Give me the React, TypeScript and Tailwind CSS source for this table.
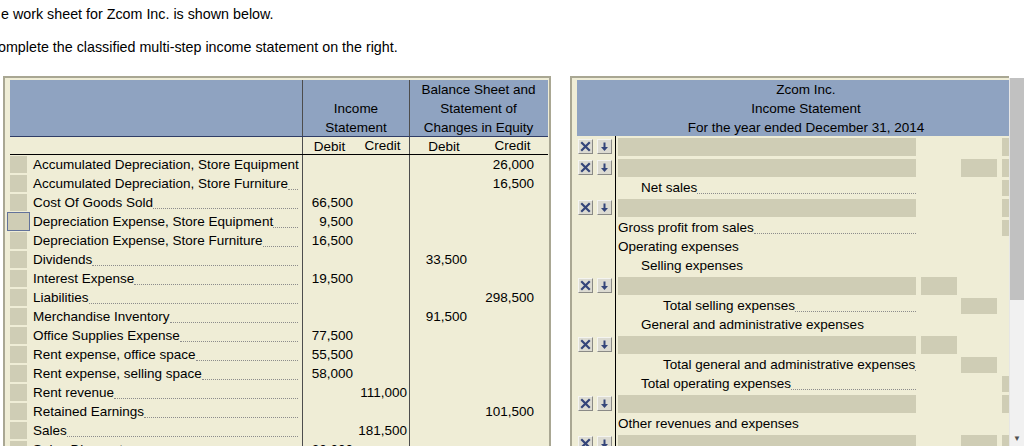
import React from "react";

type LeftRow = {
  label: string;
  isDebit?: string;
  isCredit?: string;
  bsDebit?: string;
  bsCredit?: string;
  focused?: boolean;
};

const leftRows: LeftRow[] = [
  { label: "Accumulated Depreciation, Store Equipment", bsCredit: "26,000" },
  { label: "Accumulated Depreciation, Store Furniture", bsCredit: "16,500" },
  { label: "Cost Of Goods Sold", isDebit: "66,500" },
  { label: "Depreciation Expense, Store Equipment", isDebit: "9,500", focused: true },
  { label: "Depreciation Expense, Store Furniture", isDebit: "16,500" },
  { label: "Dividends", bsDebit: "33,500" },
  { label: "Interest Expense", isDebit: "19,500" },
  { label: "Liabilities", bsCredit: "298,500" },
  { label: "Merchandise Inventory", bsDebit: "91,500" },
  { label: "Office Supplies Expense", isDebit: "77,500" },
  { label: "Rent expense, office space", isDebit: "55,500" },
  { label: "Rent expense, selling space", isDebit: "58,000" },
  { label: "Rent revenue", isCredit: "111,000" },
  { label: "Retained Earnings", bsCredit: "101,500" },
  { label: "Sales", isCredit: "181,500" },
  { label: "Sales Discounts", isDebit: "20,000" },
];

type RightRow =
  | { kind: "input"; c2?: boolean; c3?: boolean; c4?: boolean }
  | { kind: "text"; label: string; indent: 0 | 1 | 2; leader?: boolean; c2?: boolean; c3?: boolean; c4?: boolean };

const rightRows: RightRow[] = [
  { kind: "input", c4: true },
  { kind: "input", c3: true, c4: true },
  { kind: "text", label: "Net sales", indent: 1, leader: true, c4: true },
  { kind: "input", c4: true },
  { kind: "text", label: "Gross profit from sales", indent: 0, leader: true, c4: true },
  { kind: "text", label: "Operating expenses", indent: 0 },
  { kind: "text", label: "Selling expenses", indent: 1 },
  { kind: "input", c2: true },
  { kind: "text", label: "Total selling expenses", indent: 2, leader: true, c3: true },
  { kind: "text", label: "General and administrative expenses", indent: 1 },
  { kind: "input", c2: true },
  { kind: "text", label: "Total general and administrative expenses", indent: 2, leader: true, c3: true },
  { kind: "text", label: "Total operating expenses", indent: 1, leader: true, c4: true },
  { kind: "input", c4: true },
  { kind: "text", label: "Other revenues and expenses", indent: 0 },
  { kind: "input", c3: true, c4: true },
  { kind: "input", c2: true },
];

const indents = ["pl-0", "pl-[23px]", "pl-[45px]"];

function XButton() {
  return (
    <div className="flex h-[15px] w-[15px] items-center justify-center border border-t-[#f4f4f0] border-l-[#f4f4f0] border-b-[#8a8a86] border-r-[#8a8a86] bg-[#dcdbd2]">
      <svg width="11" height="11" viewBox="0 0 11 11">
        <path d="M2 2 L9 9 M9 2 L2 9" stroke="#34457a" strokeWidth="2.2" strokeLinecap="square" />
      </svg>
    </div>
  );
}

function ArrowButton() {
  return (
    <div className="flex h-[15px] w-[15px] items-center justify-center border border-t-[#f4f4f0] border-l-[#f4f4f0] border-b-[#8a8a86] border-r-[#8a8a86] bg-[#dcdbd2]">
      <svg width="11" height="11" viewBox="0 0 11 11">
        <path d="M5.5 1.5 V6.5" stroke="#34457a" strokeWidth="2" />
        <path d="M2 6 H9 L5.5 10 Z" fill="#34457a" />
      </svg>
    </div>
  );
}

function LeftPanel() {
  return (
    <div className="ml-[3px] w-[548px] shrink-0 border-2 border-[#a9a793] bg-[#efedd6] pl-[5px] pr-[1px] pt-[2px] pb-2">
      <div className="flex h-[57px] border-b border-[#2f3d66] bg-[#8fa3c1] text-center leading-[19px]">
        <div className="w-[292px]" />
        <div className="flex w-[107px] flex-col border-l border-[#4d4d4d] pt-[19px]">
          <div>Income</div>
          <div>Statement</div>
        </div>
        <div className="flex w-[138px] flex-col border-l border-[#4d4d4d]">
          <div>Balance Sheet and</div>
          <div>Statement of</div>
          <div>Changes in Equity</div>
        </div>
      </div>
      <div className="flex h-[18px] items-center border-b border-black text-center">
        <div className="w-[292px]" />
        <div className="h-full w-[54px] border-l border-[#4d4d4d]">Debit</div>
        <div className="w-[53px]">Credit</div>
        <div className="h-full w-[69px] border-l border-[#4d4d4d]">Debit</div>
        <div className="w-[69px]">Credit</div>
      </div>
      {leftRows.map((r) => (
        <div key={r.label} className="flex h-[19px]">
          <div className="flex w-[292px] items-center pr-[4px]">
            {r.focused ? (
              <div className="-ml-[3px] h-[19px] w-[23px] shrink-0 border border-[#62729a] bg-[#cfcdb5]" />
            ) : (
              <div className="h-[17px] w-[17px] shrink-0 bg-[#cfcdb5]" />
            )}
            <span className={`${r.focused ? "ml-[3px]" : "ml-[6px]"} whitespace-nowrap`}>{r.label}</span>
            <div className="mb-[3px] h-[4px] min-w-0 flex-1 self-end border-b border-dotted border-[#8c8c8c]" />
          </div>
          <div className="w-[54px] border-l border-[#4d4d4d] pr-[3px] text-right">{r.isDebit}</div>
          <div className="w-[53px] pr-[2px] text-right">{r.isCredit}</div>
          <div className="w-[69px] border-l border-[#4d4d4d] pr-[11px] text-right">{r.bsDebit}</div>
          <div className="w-[69px] pr-[13px] text-right">{r.bsCredit}</div>
        </div>
      ))}
    </div>
  );
}

function Cells({ row, tall }: { row: { c2?: boolean; c3?: boolean; c4?: boolean }; tall: boolean }) {
  const h = tall ? "h-[18px]" : "h-[16px]";
  return (
    <>
      <div className={`ml-[5px] w-[36px] shrink-0 ${h} ${row.c2 ? "bg-[#cfcdb5]" : ""}`} />
      <div className={`ml-[4px] w-[36px] shrink-0 ${h} ${row.c3 ? "bg-[#cfcdb5]" : ""}`} />
      <div className={`ml-[5px] w-[36px] shrink-0 ${h} ${row.c4 ? "bg-[#cfcdb5]" : ""}`} />
    </>
  );
}

function RightPanel() {
  return (
    <div className="ml-[19px] w-[439px] shrink-0 overflow-hidden">
      <div className="w-[480px] border-2 border-r-0 border-[#a9a793] bg-[#efedd6] pl-[5px] pt-[2px] pb-2">
        <div className="h-[56px] w-[458px] bg-[#8fa3c1] text-center leading-[19px]">
          <div>Zcom Inc.</div>
          <div>Income Statement</div>
          <div>For the year ended December 31, 2014</div>
        </div>
        {rightRows.map((r, i) =>
          r.kind === "input" ? (
            <div key={i} className="flex h-[21px]">
              <div className="flex w-[38px] items-center gap-[4px] pl-[1px]">
                <XButton />
                <ArrowButton />
              </div>
              <div className="flex items-center border-l border-black pl-[2px]">
                <div className="h-[18px] w-[298px] shrink-0 bg-[#cfcdb5]" />
                <Cells row={r} tall />
              </div>
            </div>
          ) : (
            <div key={i} className="flex h-[19px]">
              <div className="w-[38px]" />
              <div className="flex items-center border-l border-black pl-[2px]">
                <div className={`flex h-[19px] w-[298px] shrink-0 items-center ${indents[r.indent]}`}>
                  <span className="whitespace-nowrap">{r.label}</span>
                  {r.leader && (
                    <div className="mb-[3px] h-[4px] min-w-0 flex-1 self-end border-b border-dotted border-[#8c8c8c]" />
                  )}
                </div>
                <Cells row={r} tall={false} />
              </div>
            </div>
          )
        )}
      </div>
    </div>
  );
}

export default function App() {
  return (
    <div className="h-[446px] w-[1024px] overflow-hidden bg-white font-['Liberation_Sans',Arial,sans-serif] text-black">
      <div className="pt-[5px] text-[14.3px] leading-[19px]">
        <p className="pl-[1px] whitespace-nowrap">e work sheet for Zcom Inc. is shown below.</p>
        <p className="-ml-[2px] mt-[14px] whitespace-nowrap">omplete the classified multi-step income statement on the right.</p>
      </div>
      <div className="mt-[19px] flex items-start text-[13.5px] leading-[19px]">
        <LeftPanel />
        <RightPanel />
        <div className="mt-[2px] flex h-[370px] w-[15px] shrink-0 flex-col border-l border-[#e6e6e6]">
          <div className="h-[222px] bg-[#c1c1c1]" />
          <div className="flex flex-1 flex-col justify-end bg-[#f1f1f1] pb-[4px]">
            <div className="text-center text-[8px] leading-[10px] text-[#505050]">▼</div>
          </div>
        </div>
      </div>
    </div>
  );
}
